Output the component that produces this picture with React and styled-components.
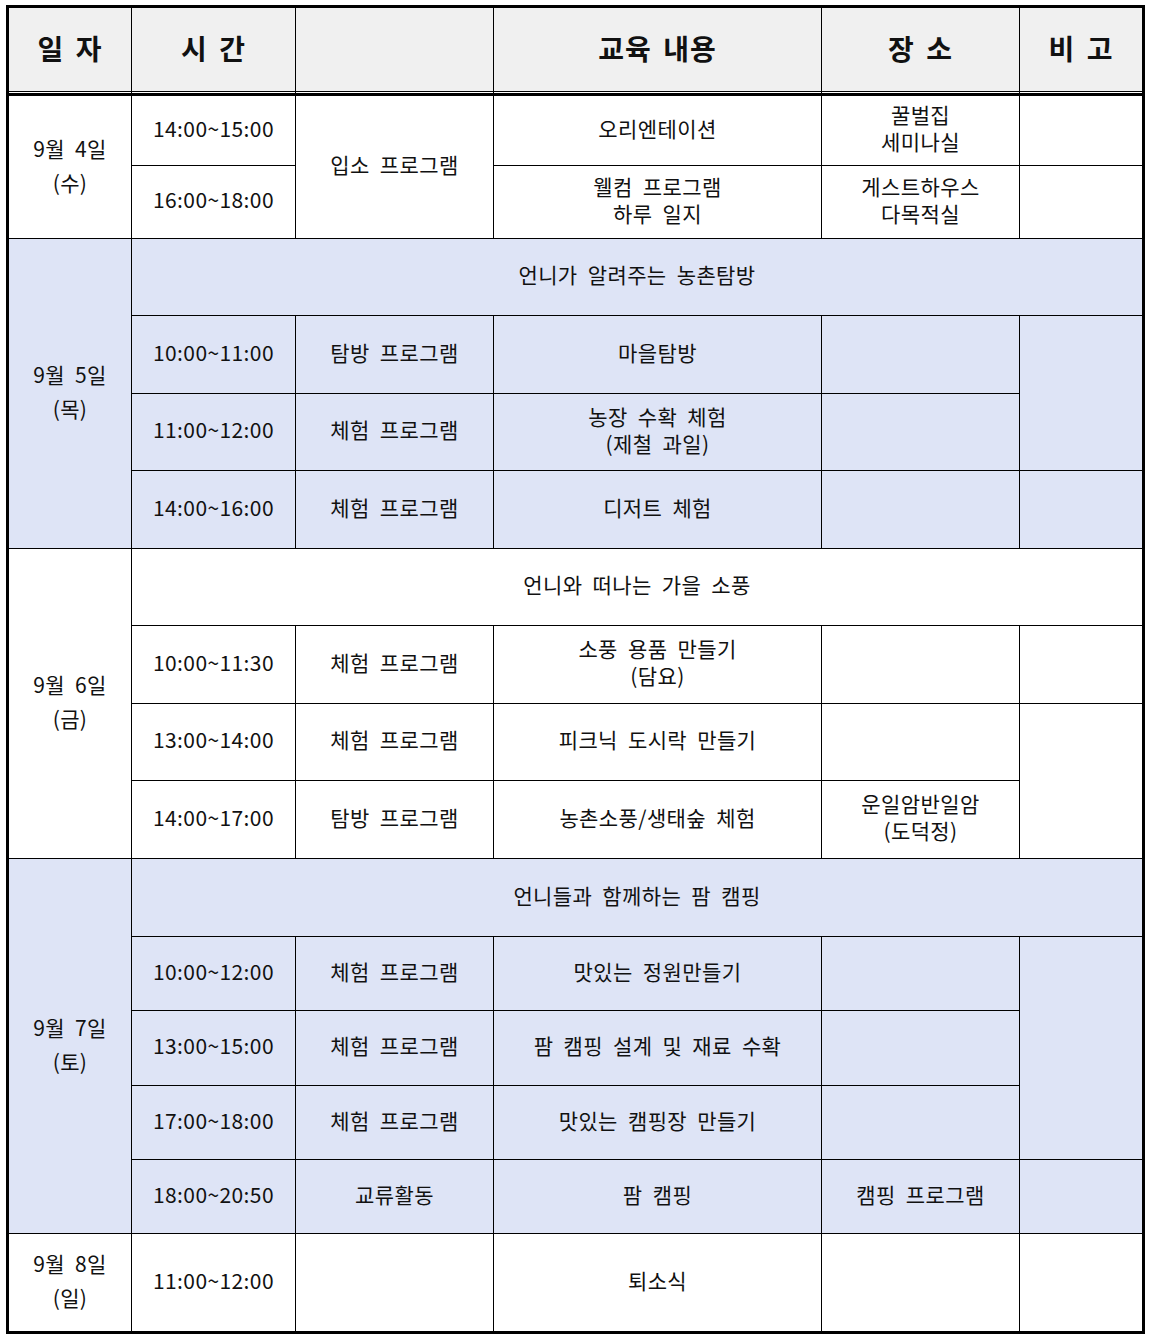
import React from "react";
import styled, { createGlobalStyle } from "styled-components";

const Global = createGlobalStyle`
  html, body {
    margin: 0;
    padding: 0;
    background: #fff;
  }
`;

const Table = styled.table`
  border-collapse: separate;
  border-spacing: 0;
  table-layout: fixed;
  width: 1139px;
  margin: 5px 0 0 6px;
  border: 3px solid #000;
  border-right-width: 2px;
  border-bottom-width: 2px;
  font-family: "Noto Sans CJK KR", "Noto Sans", sans-serif;
  color: #111;
`;

const Col = styled.col`
  width: ${p => p.$w}px;
`;

const Row = styled.tr`
  height: ${p => p.$h}px;
  background: ${p => (p.$tone === "blue" ? "#dee4f6" : "#fff")};
`;

const HeadCell = styled.th`
  padding: 0 0 3px;
  background: #f0f0f0;
  background-clip: padding-box;
  border-right: 1px solid #000;
  border-bottom: 3px double #000;
  font-size: 28px;
  font-weight: 700;
  letter-spacing: 1px;
  word-spacing: 4px;
  text-align: center;
  vertical-align: middle;
`;

const Body = styled.tbody`
  & > tr:first-child > td {
    border-top: 2px solid #000;
  }
`;

const Cell = styled.td`
  padding: 0 4px 5px;
  border-right: 1px solid #000;
  border-bottom: 1px solid #000;
  font-size: 21px;
  letter-spacing: 0.4px;
  line-height: ${p => (p.$date ? 34 : 27)}px;
  word-spacing: 5px;
  text-align: center;
  vertical-align: middle;
  white-space: nowrap;
`;

const Lines = ({ children }) => {
  const parts = children.split("\n");
  return parts.map((t, i) => (
    <React.Fragment key={i}>
      {t}
      {i < parts.length - 1 && <br />}
    </React.Fragment>
  ));
};

export default function App() {
  return (
    <>
      <Global />
      <Table>
        <colgroup>
          <Col $w={123} />
          <Col $w={164} />
          <Col $w={198} />
          <Col $w={328} />
          <Col $w={198} />
          <Col $w={123} />
        </colgroup>
        <thead>
          <Row $h={86}>
            <HeadCell>일 자</HeadCell>
            <HeadCell>시 간</HeadCell>
            <HeadCell />
            <HeadCell>교육 내용</HeadCell>
            <HeadCell>장 소</HeadCell>
            <HeadCell>비 고</HeadCell>
          </Row>
        </thead>
        <Body>
          {/* 9월 4일 */}
          <Row $h={72}>
            <Cell $date rowSpan={2}><Lines>{"9월 4일\n(수)"}</Lines></Cell>
            <Cell>14:00~15:00</Cell>
            <Cell rowSpan={2}>입소 프로그램</Cell>
            <Cell>오리엔테이션</Cell>
            <Cell><Lines>{"꿀벌집\n세미나실"}</Lines></Cell>
            <Cell />
          </Row>
          <Row $h={73}>
            <Cell>16:00~18:00</Cell>
            <Cell><Lines>{"웰컴 프로그램\n하루 일지"}</Lines></Cell>
            <Cell><Lines>{"게스트하우스\n다목적실"}</Lines></Cell>
            <Cell />
          </Row>

          {/* 9월 5일 */}
          <Row $h={77} $tone="blue">
            <Cell $date rowSpan={4}><Lines>{"9월 5일\n(목)"}</Lines></Cell>
            <Cell colSpan={5}>언니가 알려주는 농촌탐방</Cell>
          </Row>
          <Row $h={78} $tone="blue">
            <Cell>10:00~11:00</Cell>
            <Cell>탐방 프로그램</Cell>
            <Cell>마을탐방</Cell>
            <Cell />
            <Cell rowSpan={2} />
          </Row>
          <Row $h={77} $tone="blue">
            <Cell>11:00~12:00</Cell>
            <Cell>체험 프로그램</Cell>
            <Cell><Lines>{"농장 수확 체험\n(제철 과일)"}</Lines></Cell>
            <Cell />
          </Row>
          <Row $h={78} $tone="blue">
            <Cell>14:00~16:00</Cell>
            <Cell>체험 프로그램</Cell>
            <Cell>디저트 체험</Cell>
            <Cell />
            <Cell />
          </Row>

          {/* 9월 6일 */}
          <Row $h={77}>
            <Cell $date rowSpan={4}><Lines>{"9월 6일\n(금)"}</Lines></Cell>
            <Cell colSpan={5}>언니와 떠나는 가을 소풍</Cell>
          </Row>
          <Row $h={78}>
            <Cell>10:00~11:30</Cell>
            <Cell>체험 프로그램</Cell>
            <Cell><Lines>{"소풍 용품 만들기\n(담요)"}</Lines></Cell>
            <Cell />
            <Cell />
          </Row>
          <Row $h={77}>
            <Cell>13:00~14:00</Cell>
            <Cell>체험 프로그램</Cell>
            <Cell>피크닉 도시락 만들기</Cell>
            <Cell />
            <Cell rowSpan={2} />
          </Row>
          <Row $h={78}>
            <Cell>14:00~17:00</Cell>
            <Cell>탐방 프로그램</Cell>
            <Cell>농촌소풍/생태숲 체험</Cell>
            <Cell><Lines>{"운일암반일암\n(도덕정)"}</Lines></Cell>
          </Row>

          {/* 9월 7일 */}
          <Row $h={78} $tone="blue">
            <Cell $date rowSpan={5}><Lines>{"9월 7일\n(토)"}</Lines></Cell>
            <Cell colSpan={5}>언니들과 함께하는 팜 캠핑</Cell>
          </Row>
          <Row $h={74} $tone="blue">
            <Cell>10:00~12:00</Cell>
            <Cell>체험 프로그램</Cell>
            <Cell>맛있는 정원만들기</Cell>
            <Cell />
            <Cell rowSpan={3} />
          </Row>
          <Row $h={75} $tone="blue">
            <Cell>13:00~15:00</Cell>
            <Cell>체험 프로그램</Cell>
            <Cell>팜 캠핑 설계 및 재료 수확</Cell>
            <Cell />
          </Row>
          <Row $h={74} $tone="blue">
            <Cell>17:00~18:00</Cell>
            <Cell>체험 프로그램</Cell>
            <Cell>맛있는 캠핑장 만들기</Cell>
            <Cell />
          </Row>
          <Row $h={74} $tone="blue">
            <Cell>18:00~20:50</Cell>
            <Cell>교류활동</Cell>
            <Cell>팜 캠핑</Cell>
            <Cell>캠핑 프로그램</Cell>
            <Cell />
          </Row>

          {/* 9월 8일 */}
          <Row $h={98}>
            <Cell $date><Lines>{"9월 8일\n(일)"}</Lines></Cell>
            <Cell>11:00~12:00</Cell>
            <Cell />
            <Cell>퇴소식</Cell>
            <Cell />
            <Cell />
          </Row>
        </Body>
      </Table>
    </>
  );
}
